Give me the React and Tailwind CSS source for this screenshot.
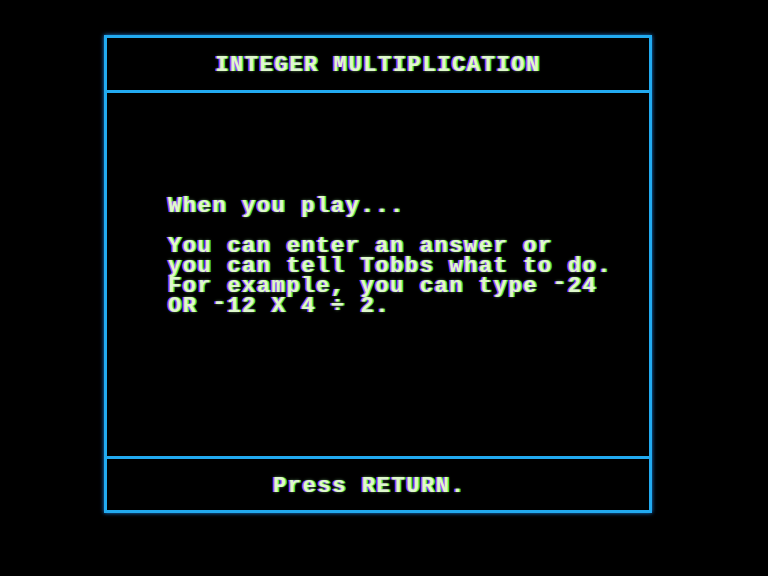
const glow = "[text-shadow:-1.5px_0_#b048ff,1.5px_0_#48e848,0_0_3px_rgba(180,255,170,0.5)]";

const Minus = () => <span className="inline-block -translate-y-[4px]">-</span>;

const App = () => {
  const textClass = `text-[#def8cc] font-bold text-[22px] tracking-[1.6px] leading-[20px] whitespace-pre ${glow}`;
  return (
    <div className="w-[768px] h-[576px] bg-black pt-[35px] pl-[104px] font-['Liberation_Mono',monospace]">
      <div className="w-[548px] h-[478px] border-[3px] border-[#22aaf0] shadow-[0_0_4px_#1a7fe0] flex flex-col">
        {/* Title */}
        <div className="h-[55px] pt-[4px] border-b-[3px] border-[#22aaf0] flex items-center justify-center">
          <span className={textClass}>INTEGER MULTIPLICATION</span>
        </div>

        {/* Body */}
        <div className="h-[366px] border-b-[3px] border-[#22aaf0] pt-[104px] pl-[61px]">
          <div className={textClass}>When you play...</div>
          <div className={textClass}> </div>
          <div className={textClass}>You can enter an answer or</div>
          <div className={textClass}>you can tell Tobbs what to do.</div>
          <div className={textClass}>For example, you can type <Minus />24</div>
          <div className={textClass}>OR <Minus />12 X 4 ÷ 2.</div>
        </div>

        {/* Footer */}
        <div className="flex-1 pt-[4px] flex items-center pl-[166px]">
          <span className={textClass}>Press RETURN.</span>
        </div>
      </div>
    </div>
  );
};

export default App;
